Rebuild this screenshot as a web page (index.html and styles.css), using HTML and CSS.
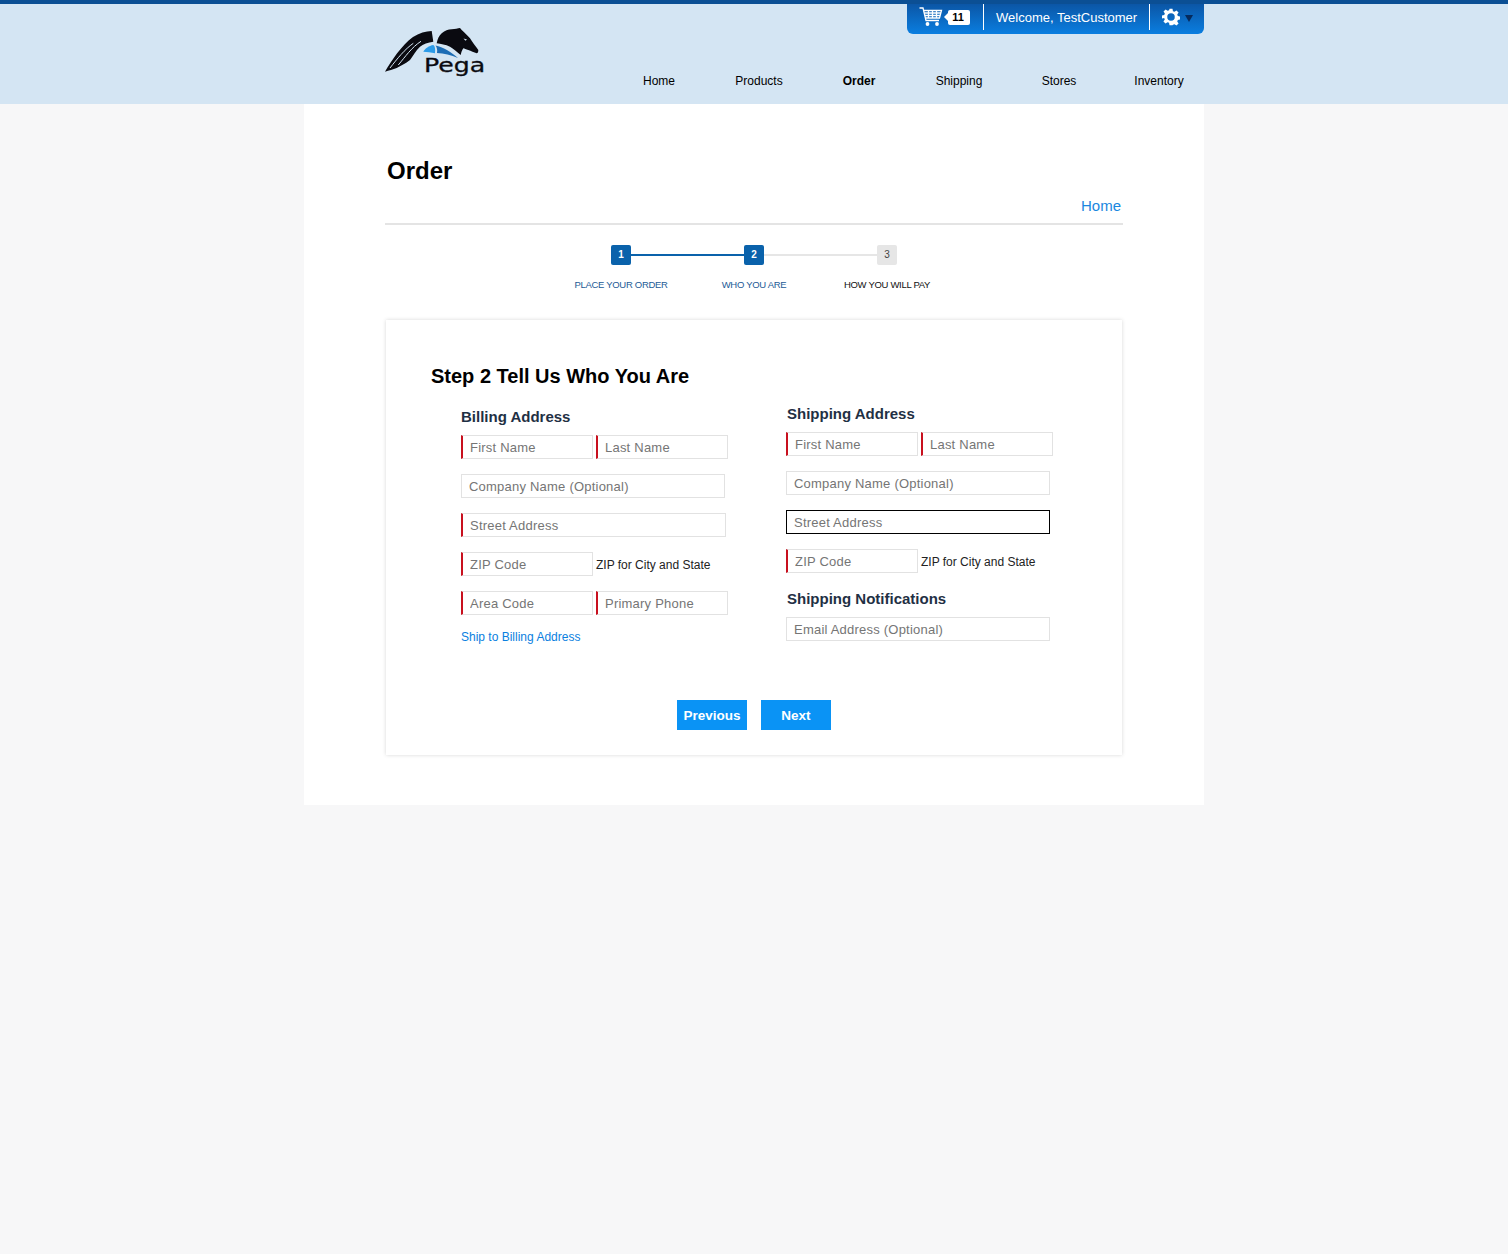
FILE: index.html
```html
<!DOCTYPE html>
<html lang="en">
<head>
<meta charset="utf-8">
<title>Order</title>
<link rel="stylesheet" href="styles.css">
</head>
<body>
<header class="site-header">
  <div class="header-inner">
    <div class="user-bar">
      <span class="cart">
        <svg class="cart-icon" width="24" height="20" viewBox="0 0 24 20" fill="none" stroke="#fff" stroke-width="1.3">
          <path d="M0.5 1H4L7 13.5H20"/>
          <path d="M4.6 3.5H22.5L20.5 11H6.4"/>
          <path d="M5.2 6H22M5.8 8.5H21M9.5 3.5V11M13.5 3.5V11M17.5 3.5V11"/>
          <circle cx="8.5" cy="17" r="1.9" fill="#fff" stroke="none"/>
          <circle cx="18" cy="17" r="1.9" fill="#fff" stroke="none"/>
        </svg>
        <span class="cart-count">11</span>
      </span>
      <span class="welcome">Welcome, TestCustomer</span>
      <span class="settings">
        <svg width="18" height="18" viewBox="0 0 24 24">
          <path fill="#fff" fill-rule="evenodd" d="M10 1h4l.6 3.200 2 .8L19.300 3.200l2.800 2.800-1.800 2.700.8 2 3.200.6v4l-3.200.6-.8 2 1.800 2.700-2.800 2.800-2.700-1.800-2 .8L14 23h-4l-.6-3.200-2-.8-2.700 1.800-2.800-2.800 1.800-2.700-.8-2L-.2 14v-4l3.200-.6.8-2L2 4.700 4.800 2l2.700 1.800 2-.8zM12 7a5 5 0 1 0 0 10 5 5 0 0 0 0-10z"/>
        </svg>
        <span class="caret"></span>
      </span>
    </div>
    <div class="brand-row">
      <div class="logo">
        <svg class="logo-mark" width="100" height="48" viewBox="0 0 100 48">
          <path fill="#0a0a10" d="M0 43.700C6 33 17 17 28 9 34 5 41 3 46.700 3L48.300 13.700C43 14.500 38 16 35 18.700 31 22 28 28 25 32 20 36 15 38 11.700 40 8 41.500 4 42.500 0 43.700z"/>
          <path fill="none" stroke="#d4e5f3" stroke-width="1" d="M5 40C12 31 20 21 28.300 15.300M13.300 37C20 29 27 19 36 13.300"/>
          <path fill="#0a0a10" d="M51.700 15.300C52.500 11 54 7.500 56.700 5.300 60 2.500 63 1.300 66.700 1.300 70 1 73 .5 75 0L76.700 2C80 5 83 8 85 10.300 87.500 14.500 90.500 18 93.300 22 93.500 24 92.500 25.300 91.700 25.300 89 24.500 86 23 83.300 22 81 21.200 79.500 20.700 78.300 20.300 77 22 76.300 24.500 75.700 27 72 24 68.500 20.500 65 18.700 60.500 16.700 56 15.800 51.700 15.300z"/>
          <path fill="#d4e5f3" d="M78.500 10.500l3.500 1-1.500 1.300z"/>
          <path fill="#2c9be8" d="M38.300 23.700C40 20.500 44 17.700 48.300 17 50 18 50.500 21 50 25.300 46 24.500 42 24 38.300 23.700z"/>
          <path fill="#1c6db5" d="M50.500 17.500C58 19 66 24 73 30 66 27 59 25.500 52 25 52.500 22 52 19.500 50.500 17.500z"/>
        </svg>
        <span class="logo-word">Pega</span>
      </div>
      <nav class="main-nav">
        <a class="nav-item">Home</a>
        <a class="nav-item">Products</a>
        <a class="nav-item nav-active">Order</a>
        <a class="nav-item">Shipping</a>
        <a class="nav-item">Stores</a>
        <a class="nav-item">Inventory</a>
      </nav>
    </div>
  </div>
</header>

<main class="page">
  <h1 class="page-title">Order</h1>
  <div class="crumb-row"><a class="crumb">Home</a></div>

  <ol class="stepper">
    <li class="step step-done">
      <span class="step-badge">1</span>
      <span class="step-label">PLACE YOUR ORDER</span>
    </li>
    <li class="step step-done step-current">
      <span class="step-badge">2</span>
      <span class="step-label">WHO YOU ARE</span>
    </li>
    <li class="step step-todo">
      <span class="step-badge">3</span>
      <span class="step-label">HOW YOU WILL PAY</span>
    </li>
  </ol>

  <section class="card">
    <h2 class="card-title">Step 2 Tell Us Who You Are</h2>
    <div class="columns">
      <div class="col col-billing">
        <h3 class="section-title">Billing Address</h3>
        <div class="row">
          <input class="field req w-half" placeholder="First Name">
          <input class="field req w-half-b" placeholder="Last Name">
        </div>
        <div class="row"><input class="field w-full" placeholder="Company Name (Optional)"></div>
        <div class="row"><input class="field req w-full-r" placeholder="Street Address"></div>
        <div class="row">
          <input class="field req w-half" placeholder="ZIP Code">
          <span class="hint">ZIP for City and State</span>
        </div>
        <div class="row">
          <input class="field req w-half" placeholder="Area Code">
          <input class="field req w-half-b" placeholder="Primary Phone">
        </div>
        <a class="ship-link">Ship to Billing Address</a>
      </div>
      <div class="col col-shipping">
        <h3 class="section-title">Shipping Address</h3>
        <div class="row">
          <input class="field req w-half" placeholder="First Name">
          <input class="field req w-half-b" placeholder="Last Name">
        </div>
        <div class="row"><input class="field w-full" placeholder="Company Name (Optional)"></div>
        <div class="row"><input class="field field-focus w-full" placeholder="Street Address"></div>
        <div class="row">
          <input class="field req w-half" placeholder="ZIP Code">
          <span class="hint">ZIP for City and State</span>
        </div>
        <h3 class="section-title section-notify">Shipping Notifications</h3>
        <div class="row"><input class="field w-full" placeholder="Email Address (Optional)"></div>
      </div>
    </div>
    <div class="actions">
      <button class="btn" type="button">Previous</button>
      <button class="btn" type="button">Next</button>
    </div>
  </section>
</main>
</body>
</html>
```
FILE: styles.css
```css
* { box-sizing: border-box; }
html, body { margin: 0; padding: 0; }
body {
  background: #f7f7f8;
  font-family: "Liberation Sans", Arial, sans-serif;
  color: #000;
  min-height: 1254px;
}
.site-header {
  height: 104px;
  background: #d4e5f3;
  border-top: 4px solid #0b4f94;
}
.header-inner {
  width: 900px;
  margin-left: 304px;
  display: flex;
  flex-direction: column;
  align-items: flex-end;
}
.user-bar {
  width: 297px;
  height: 30px;
  display: flex;
  align-items: flex-start;
  background: linear-gradient(#0b56a6, #0a7ee0);
  border-radius: 0 0 6px 6px;
  color: #fff;
  font-size: 13px;
}
.cart {
  width: 77px;
  height: 26px;
  padding-left: 12px;
  display: flex;
  align-items: center;
  border-right: 1px solid #fff;
}
.cart-count {
  position: relative;
  width: 22px;
  height: 15px;
  margin-left: 5px;
  background: #fff;
  border-radius: 2px;
  color: #000;
  font-size: 11px;
  font-weight: bold;
  line-height: 15px;
  text-align: center;
  padding-right: 2px;
}
.cart-count::before {
  content: "";
  position: absolute;
  left: -4px;
  top: 3px;
  border: 4px solid transparent;
  border-left: 0;
  border-right-color: #fff;
}
.welcome {
  width: 166px;
  height: 26px;
  line-height: 27px;
  padding-left: 12px;
  border-right: 1px solid #fff;
  white-space: nowrap;
}
.settings {
  display: flex;
  align-items: center;
  padding-left: 12px;
  height: 26px;
}
.caret {
  margin-left: 5px;
  margin-top: 3px;
  border: 4px solid transparent;
  border-top: 7px solid #062a5c;
  border-bottom: 0;
}
.brand-row {
  width: 100%;
  height: 70px;
  display: flex;
  justify-content: space-between;
  padding-left: 81px;
}
.logo {
  position: relative;
  width: 100px;
  height: 48px;
  margin-top: -6px;
}
.logo-mark { display: block; }
.logo-word {
  position: absolute;
  left: 39px;
  top: 25px;
  font-size: 20px;
  line-height: 24px;
  font-family: "DejaVu Sans", sans-serif;
  color: #0a0a10;
  -webkit-text-stroke: 0.3px #0a0a10;
  transform: scaleX(1.26);
  transform-origin: left;
}
.main-nav {
  display: flex;
  margin-right: -5px;
  padding-top: 40px;
}
.nav-item {
  width: 100px;
  font-size: 12px;
  line-height: 14px;
  text-align: center;
  color: #000;
}
.nav-active { font-weight: bold; }

.page {
  width: 900px;
  height: 701px;
  margin-left: 304px;
  padding: 0 81px;
  background: #fff;
}
.page-title {
  margin: 0;
  padding: 53px 0 0 2px;
  font-size: 24px;
  line-height: 28px;
  font-weight: bold;
}
.crumb-row {
  height: 40px;
  padding: 12px 2px 0 0;
  border-bottom: 2px solid #e4e4e4;
  text-align: right;
}
.crumb {
  font-size: 15px;
  line-height: 18px;
  color: #1a87e0;
}
.stepper {
  list-style: none;
  display: flex;
  justify-content: center;
  margin: 20px 0 0;
  padding: 0;
  height: 75px;
}
.step {
  position: relative;
  width: 133px;
  display: flex;
  flex-direction: column;
  align-items: center;
}
.step-badge {
  position: relative;
  z-index: 1;
  width: 20px;
  height: 20px;
  border-radius: 2px;
  background: #0a62ab;
  color: #fff;
  font-size: 10px;
  font-weight: bold;
  line-height: 20px;
  text-align: center;
}
.step-label {
  margin-top: 14px;
  font-size: 9.500px;
  line-height: 12px;
  white-space: nowrap;
  color: #235a96;
  letter-spacing: -0.3px;
}
.step-done::after {
  content: "";
  position: absolute;
  left: 50%;
  top: 9px;
  width: 133px;
  height: 2px;
  background: #0a62ab;
}
.step-current::after { background: #e6e6e6; }
.step-todo .step-badge { background: #e6e6e6; color: #444; font-weight: normal; }
.step-todo .step-label { color: #111; }

.card {
  width: 736px;
  height: 435px;
  margin-left: 1px;
  padding-top: 44px;
  background: #fff;
  box-shadow: 0 0 4px rgba(0, 0, 0, 0.16);
}
.card-title {
  margin: 0;
  padding-left: 45px;
  font-size: 20px;
  line-height: 24px;
  font-weight: bold;
}
.columns {
  display: flex;
  height: 313px;
}
.col-billing { width: 400px; padding: 20px 0 0 75px; }
.col-shipping { padding-top: 17px; }
.section-title {
  margin: 0 0 9px;
  padding-left: 1px;
  font-size: 15px;
  line-height: 18px;
  font-weight: bold;
  color: #1f3044;
}
.col-billing .section-title { padding-left: 0; }
.section-notify { margin-top: 17px; }
.row {
  display: flex;
  align-items: center;
  height: 24px;
  margin-bottom: 15px;
}
.field {
  height: 24px;
  padding: 0 0 0 7px;
  border: 1px solid #e2e2e2;
  border-radius: 0;
  background: #fff;
  font-family: "Liberation Sans", Arial, sans-serif;
  font-size: 13px;
  letter-spacing: 0.22px;
  color: #333;
  outline: none;
}
.field::placeholder { color: #757575; opacity: 1; }
.req { border-left: 2px solid #c8101e; }
.field-focus { border: 1px solid #000; }
.w-half { width: 132px; }
.w-half-b { width: 132px; margin-left: 3px; }
.w-full { width: 264px; }
.w-full-r { width: 265px; }
.hint {
  margin: 1px 0 0 3px;
  font-size: 12px;
  color: #222;
  white-space: nowrap;
}
.ship-link {
  display: block;
  margin-top: 0;
  font-size: 12px;
  line-height: 14px;
  color: #0a80e0;
}
.actions {
  display: flex;
  justify-content: center;
  gap: 14px;
  margin-top: -1px;
}
.btn {
  width: 70px;
  height: 30px;
  padding: 0;
  border: 0;
  background: #0a93f5;
  color: #fff;
  font-family: "Liberation Sans", Arial, sans-serif;
  font-size: 13.500px;
  font-weight: bold;
}
```
